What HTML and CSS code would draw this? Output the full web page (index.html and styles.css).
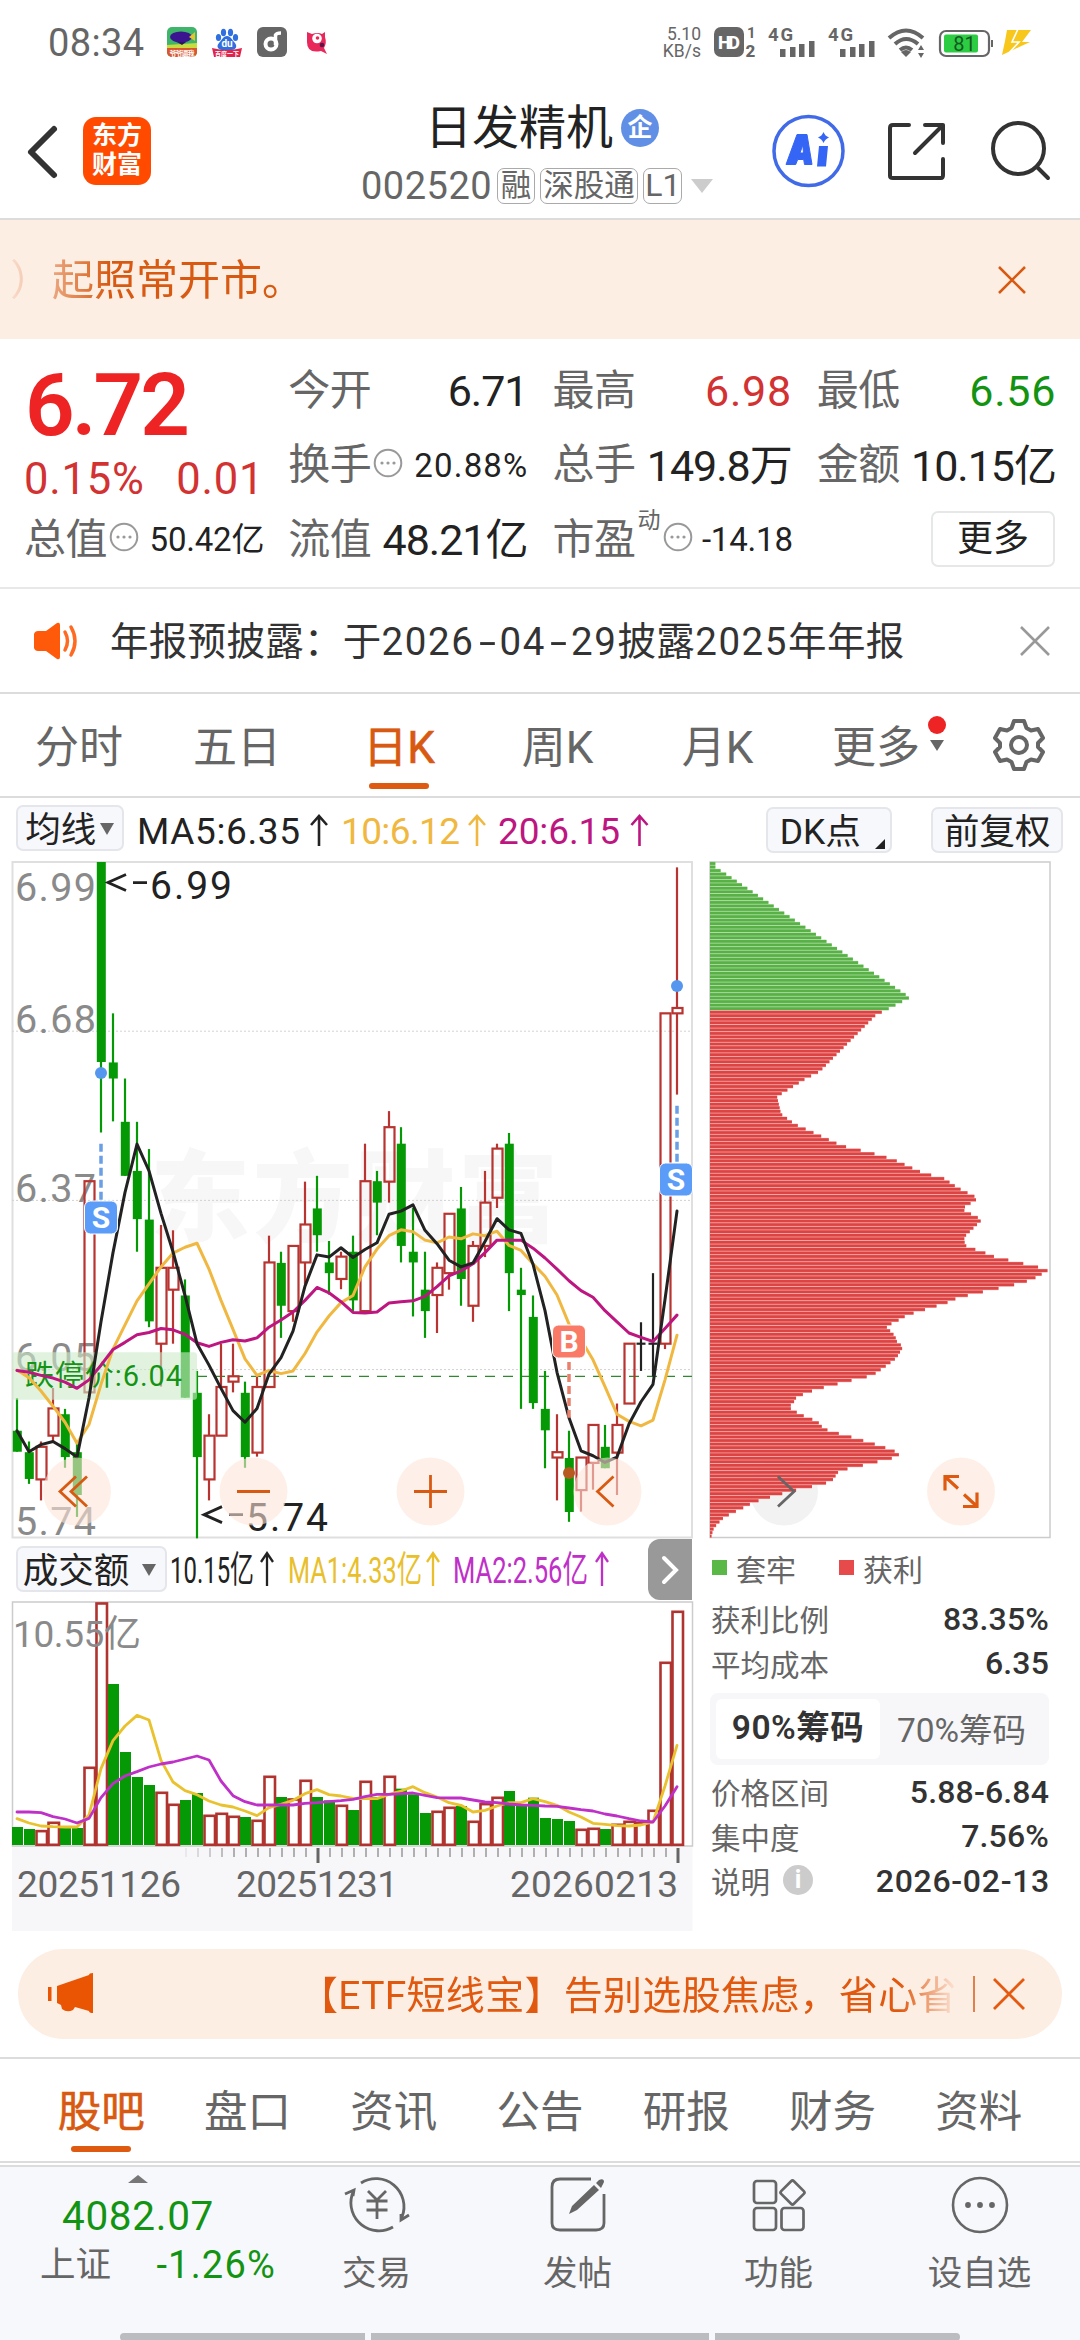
FILE: index.html
```html
<!DOCTYPE html>
<html lang="zh-CN">
<head>
<meta charset="utf-8">
<title>日发精机 002520</title>
<link rel="stylesheet" href="styles.css">
</head>
<body>
<div class="status">
  <span class="clock">08:34</span>
  <svg class="apps" width="164" height="32" viewBox="0 0 164 32">
    <defs><clipPath id="rc"><rect width="30" height="30" rx="5"/></clipPath></defs>
    <g clip-path="url(#rc)"><rect width="30" height="30" fill="#3fb56a"/><path d="M0 18L30 16V24H0Z" fill="#c9dc3f"/><rect y="21" width="30" height="9" fill="#d9562e"/><ellipse cx="14" cy="10" rx="11" ry="5.500" fill="#3b1590"/><path d="M22 10l6-5v9z" fill="#e5c22f"/><path d="M10 15h9l-4 3z" fill="#2a1560"/><text x="15" y="28.500" font-size="7" font-weight="700" fill="#fff" text-anchor="middle" textLength="25">爷爷逼我</text></g>
    <g transform="translate(45)" fill="#2f6fe0"><ellipse cx="6.500" cy="10.500" rx="2.600" ry="3.600"/><ellipse cx="11.500" cy="5.500" rx="2.600" ry="3.800"/><ellipse cx="18.500" cy="5.500" rx="2.600" ry="3.800"/><ellipse cx="23.500" cy="10.500" rx="2.600" ry="3.600"/><path d="M15 9c4 0 5 4 8 7 3 4 0 7-3 7H10c-4 0-6-4-3-7s4-7 8-7z"/><text x="15" y="20" font-size="10" font-weight="700" fill="#fff" text-anchor="middle">du</text><path d="M0 21q15 4 30 0l-2 9H2z" fill="#e0244e"/><text x="15" y="28.500" font-size="6" font-weight="700" fill="#fff" text-anchor="middle">百度一下</text></g>
    <g transform="translate(90)"><rect width="30" height="30" rx="6" fill="#666"/><circle cx="14" cy="17" r="5.500" fill="none" stroke="#fff" stroke-width="4"/><path d="M18.500 18V8q1-2 5.500-2" fill="none" stroke="#fff" stroke-width="3.500"/></g>
    <g transform="translate(140 4)"><path d="M0 1l5 2q6-2 10 0l3-2v5q2 6-1 11l3 6-6-3Q0 23 0 11z" fill="#e8285a"/><circle cx="10" cy="7.500" r="4.800" fill="#fff"/><circle cx="10.500" cy="7" r="1.800" fill="#e8285a"/><circle cx="15" cy="14" r="2.300" fill="#5b1548"/></g>
  </svg>
  <div class="net"><span>5.10</span><span>KB/s</span></div>
  <svg class="sig" width="330" height="32" viewBox="712 26 330 32">
    <g fill="#666"><rect x="714" y="27" width="30" height="30" rx="7"/>
    <text x="729" y="48.500" font-size="18" font-weight="800" fill="#fff" text-anchor="middle" textLength="22">HD</text>
    <text x="747" y="38" font-size="15" font-weight="700">1</text><text x="745.500" y="56.500" font-size="17" font-weight="800">2</text>
    <text x="768" y="41" font-size="18.500" font-weight="700" textLength="25">4G</text><text x="828" y="41" font-size="18.500" font-weight="700" textLength="25">4G</text>
    <path d="M780 49h5.500v8H780zM790 47h5.500v10H790zM799 44h5.500v13H799zM809 41h5.500v16H809zM840 49h5.500v8H840zM850 47h5.500v10H850zM859 44h5.500v13H859zM869 41h5.500v16H869z"/><path d="M906 57l-5-5q5-4 10 0z"/><path d="M918 50l3-5 3 5zM918 53l3 5 3-5z"/></g>
    <g fill="none" stroke="#666"><path d="M889 38q17-15 34 0M895 44q11-10 23 0M900 50q6-5 12 0" stroke-width="4"/><rect x="940" y="31" width="49" height="25" rx="6" stroke-width="2.200"/></g>
    <rect x="944" y="34.500" width="34" height="18" rx="2" fill="#2ccc43"/><rect x="991" y="40" width="2" height="7" fill="#666"/>
    <text x="964.500" y="51" font-size="20" fill="#14591f" text-anchor="middle">81</text>
    <path d="M1007 30h24l-9 12h8l-28 13 3-14z" fill="#f8c71c"/><path d="M1018 29l-6 13h7l-12 13" fill="none" stroke="#fff" stroke-width="1.600"/>
  </svg>
</div>

<header class="head">
  <svg class="back" width="36" height="60" viewBox="0 0 36 60"><path d="M30 7L7 30l23 23" fill="none" stroke="#333" stroke-width="6" stroke-linecap="round" stroke-linejoin="round"/></svg>
  <div class="logo"><span>东方</span><span>财富</span></div>
  <div class="title">
    <div class="name">日发精机<span class="qi">企</span></div>
    <div class="code">002520<span class="tag">融</span><span class="tag">深股通</span><span class="tag">L1</span><i class="tri-down pale"></i></div>
  </div>
  <svg class="acts" width="292" height="76" viewBox="768 113 292 76">
    <circle cx="808.500" cy="151" r="34.500" fill="#fff" stroke="#416ae8" stroke-width="3.500"/>
    <path d="M797 134.500h10l5 30h-7.500l-.8-5h-6l-2 5H786zM800 153h3.500l-.7-8z" fill="#3565f5" fill-rule="evenodd" stroke="#3565f5" stroke-width="1" stroke-linejoin="round"/>
    <path d="M819 146h9l-2 20.500h-9zM823.500 132q1.500 4 5.500 5.500-4 1.500-5.500 5.500-1.500-4-5.500-5.500 4-1.500 5.500-5.500z" fill="#3565f5"/>
    <g fill="none" stroke="#333" stroke-width="4" stroke-linecap="round" stroke-linejoin="round"><path d="M909 125H893q-3 0-3 3v48q0 2 3 2h48q2 0 2-3v-16M925 125h18v18M943 125l-28 28"/><circle cx="1018.500" cy="148.500" r="25.500"/><path d="M1037 167l11 11"/></g>
  </svg>
</header>

<div class="notice"><span class="marquee">）起照常开市。</span>
  <svg width="32" height="32" viewBox="0 0 32 32"><path d="M3 3l26 26M29 3L3 29" stroke="#d85a12" stroke-width="2.600"/></svg></div>

<section class="quote">
  <div class="main"><b>6.72</b><p><span>0.15%</span><span>0.01</span></p></div>
  <div class="q"><label>今开</label><span>6.71</span></div>
  <div class="q"><label>最高</label><span class="wide red">6.98</span></div>
  <div class="q"><label>最低</label><span class="wide green">6.56</span></div>
  <div class="q"><label>换手</label><svg class="dots" viewBox="0 0 30 30"><use href="#more"/></svg><span class="s pct">20.88%</span></div>
  <div class="q"><label>总手</label><span>149.8万</span></div>
  <div class="q"><label>金额</label><span>10.15亿</span></div>
  <div class="q"><label>总值</label><svg class="dots" viewBox="0 0 30 30"><use href="#more"/></svg><span class="s">50.42亿</span></div>
  <div class="q"><label>流值</label><span>48.21亿</span></div>
  <div class="q"><label>市盈</label><sup>动</sup><svg class="dots" viewBox="0 0 30 30"><use href="#more"/></svg><span class="s">-14.18</span></div>
  <div class="q"><span class="more">更多</span></div>
  <svg width="0" height="0" class="sprite"><symbol id="more" viewBox="0 0 30 30"><circle cx="15" cy="15" r="13.300" fill="none" stroke="#999" stroke-width="2"/><circle cx="9" cy="15" r="1.600" fill="#999"/><circle cx="15" cy="15" r="1.600" fill="#999"/><circle cx="21" cy="15" r="1.600" fill="#999"/></symbol></svg>
</section>

<div class="report">
  <svg width="46" height="40" viewBox="0 0 46 40"><path d="M4 10h8L23 2q3-1 3 2v32q0 3-3 2l-11-8H4q-3 0-4-3V13q1-3 4-3z" fill="#ff5a0a"/><path d="M31 11q5 9 0 18M37 6q8 14 0 28" fill="none" stroke="#ff6a22" stroke-width="3.500" stroke-linecap="round"/></svg>
  <span>年报预披露：于<em>2026<i>-</i>04<i>-</i>29</em>披露<em>2025</em>年年报</span>
  <svg class="x" width="32" height="32" viewBox="0 0 32 32"><path d="M2 2l28 28M30 2L2 30" stroke="#999" stroke-width="2.600"/></svg>
</div>

<nav class="periods">
  <span>分时</span><span>五日</span><span class="on">日K</span><span>周K</span><span>月K</span><span class="mo">更多<i class="dot"></i><i class="tri-down"></i></span>
  <svg width="54" height="54" viewBox="-27 -27 54 54" fill="none" stroke="#666" stroke-width="4"><path d="M-5-24H5L7.500-17 12-14.500 19-16 24-7 19-2V2L24 7 19 16 12 14.500 7.500 17 5 24H-5L-7.500 17-12 14.500-19 16-24 7-19 2V-2L-24-7-19-16-12-14.500-7.500-17Z" stroke-linejoin="round"/><circle r="8"/></svg>
</nav>

<div class="ma">
  <span class="btn b1">均线<i class="tri-down sm"></i></span>
  <svg width="530" height="50" viewBox="132 805 530 50" font-size="37"><text x="137" y="843.500" fill="#222" textLength="163">MA5:6.35</text><text x="341" y="843.500" fill="#f0b840" textLength="119">10:6.12</text><text x="498" y="843.500" fill="#bd1680" textLength="122">20:6.15</text>
  <g fill="none" stroke-width="2.600"><path d="M319 846v-29M311 825l8-9 8 9" stroke="#222"/><path d="M477 846v-29M469 825l8-9 8 9" stroke="#f0b840"/><path d="M639.500 846v-29M631.500 825l8-9 8 9" stroke="#bd1680"/></g></svg>
  <span class="btn b2">DK点<i class="corner"></i></span>
  <span class="btn b3">前复权</span>
</div>

<main class="board">
  <section class="left">
    <svg id="kline" width="682" height="677" viewBox="0 0 682 677"></svg>
    <div class="volhead">
      <span class="btn b4">成交额<i class="tri-down sm"></i></span>
      <svg width="481" height="60" viewBox="167 1539 481 60" font-size="37"><text x="170" y="1583" fill="#222" textLength="84" lengthAdjust="spacingAndGlyphs">10.15亿</text><text x="288" y="1583" fill="#e9bf2c" textLength="134" lengthAdjust="spacingAndGlyphs">MA1:4.33亿</text><text x="453" y="1583" fill="#bf30c8" textLength="135" lengthAdjust="spacingAndGlyphs">MA2:2.56亿</text>
      <g fill="none" stroke-width="2.300"><path d="M267 1586v-33M261 1562l6-9 6 9" stroke="#222"/><path d="M433 1586v-33M427 1562l6-9 6 9" stroke="#e9bf2c"/><path d="M602 1586v-33M596 1562l6-9 6 9" stroke="#bf30c8"/></g></svg>
      <span class="next"><svg width="20" height="32" viewBox="0 0 20 32"><path d="M4 4l12 12L4 28" fill="none" stroke="#fff" stroke-width="4" stroke-linecap="round"/></svg></span>
    </div>
    <svg id="volume" width="682" height="330" viewBox="0 0 682 330"></svg>
  </section>
  <section class="right">
    <svg id="chips" width="342" height="677" viewBox="0 0 342 677"></svg>
    <div class="legend"><i class="g"></i>套牢<i class="r"></i>获利</div>
    <dl><dt>获利比例</dt><dd>83.35%</dd><dt>平均成本</dt><dd>6.35</dd></dl>
    <div class="seg"><b>90%筹码</b><span>70%筹码</span></div>
    <dl><dt>价格区间</dt><dd>5.88-6.84</dd><dt>集中度</dt><dd>7.56%</dd><dt>说明<i class="info">i</i></dt><dd class="date">2026-02-13</dd></dl>
  </section>
</main>

<div class="promo">
  <svg width="46" height="42" viewBox="0 0 46 42" fill="#ea5504"><path d="M0 14h3.500v14H0zM9 13L41 2q0-2 4-2v40q-4 0-4-2l-14-4-2 3q-6 3-11-1l-1-4-4-2z"/></svg>
  <span class="txt">【ETF短线宝】告别选股焦虑，省心省</span><i class="bar"></i>
  <svg width="34" height="34" viewBox="0 0 34 34"><path d="M2 2l30 30M32 2L2 32" stroke="#e35a10" stroke-width="2.800"/></svg>
</div>

<nav class="tabs"><span class="on">股吧</span><span>盘口</span><span>资讯</span><span>公告</span><span>研报</span><span>财务</span><span>资料</span></nav>

<footer class="foot">
  <div class="index"><i class="tri-up"></i><b>4082.07</b><p><span>上证</span><span class="green">-1.26%</span></p></div>
  <div class="act"><svg width="66" height="60" viewBox="-33 -30 66 60" fill="none" stroke="#666" stroke-width="2.800"><path d="M-16-22A28 28 0 0 1 25 12l-1 3M24 9v6l8-5M16 22A28 28 0 0 1-25-10l2-5M-32-11l9-4-1 6"/><path d="M-9-14L0-5 9-14M0-5V14M-10.500-4h21M-10.500 5h21"/></svg>交易</div>
  <div class="act"><svg width="66" height="60" viewBox="-33 -30 66 60" fill="none" stroke="#666" stroke-width="2.800"><path d="M13-26H-18q-8 0-8 8v36q0 7 8 7h36q8 0 8-7V-11"/><path d="M-9 9l3-8L16-20l5 5L-1 5zM18-22l3-3q5-2 5 2l-3 6z" fill="#666" stroke="none"/></svg>发帖</div>
  <div class="act"><svg width="66" height="60" viewBox="-33 -30 66 60" fill="none" stroke="#666" stroke-width="2.700"><rect x="-25" y="-24" width="22" height="22" rx="3"/><rect x="-25" y="3" width="22" height="22" rx="3"/><rect x="2.500" y="3" width="22" height="22" rx="3"/><rect x="4.500" y="-21.500" width="18" height="18" rx="2" transform="rotate(45 13.500 -12.500)"/></svg>功能</div>
  <div class="act"><svg width="66" height="60" viewBox="-33 -30 66 60"><circle r="27" fill="none" stroke="#666" stroke-width="2.600"/><g fill="#666"><circle cx="-12" r="2.900"/><circle r="2.900"/><circle cx="12" r="2.900"/></g></svg>设自选</div>
  <div class="gesture"><i></i><i></i><i></i></div>
</footer>
<script src="script.js"></script>
</body>
</html>
```

FILE: styles.css
```css
* { box-sizing: border-box; margin: 0; padding: 0; }
body { width: 1080px; height: 2340px; overflow: hidden; background: #fff; color: #222; font-family: Roboto, "Noto Sans CJK SC", sans-serif; font-weight: 400; }
svg { display: block; flex: none; overflow: visible; }
svg text { font-family: Roboto, "Noto Sans CJK SC", sans-serif; }
i, em { font-style: normal; }
.red { color: #d23232; }
.green { color: #129412; }
.sprite { position: absolute; }

.status { height: 84px; display: flex; align-items: flex-start; padding: 27px 38px 0 48px; color: #666; }
.clock { font-size: 38px; line-height: 32px; width: 119px; letter-spacing: .4px; }
.net { width: 37px; margin-left: 333px; font-size: 17.500px; line-height: 17px; display: flex; flex-direction: column; align-items: flex-end; margin-top: -1px; }
.sig { margin-left: 11px; margin-top: -1px; }

.head { height: 136px; display: flex; border-bottom: 2px solid #dcdcdc; padding-left: 24px; }
.back { margin-top: 38px; }
.logo { width: 68px; height: 68px; margin: 33px 0 0 23px; border-radius: 13px; background: #ff4a00; color: #fff; font-size: 25px; font-weight: 700; line-height: 29px; padding-top: 4px; display: flex; flex-direction: column; align-items: center; }
.title { width: 410px; margin-left: 186px; }
.name { display: flex; align-items: center; height: 60px; font-size: 47px; margin: 14px 0 0 88px; line-height: 60px; }
.qi { width: 38px; height: 38px; border-radius: 50%; background: #618fe6; color: #fff; font-size: 25px; line-height: 37px; text-align: center; font-weight: 700; margin-left: 8px; }
.code { display: flex; align-items: center; height: 40px; margin: 8px 0 0 24px; font-size: 38px; letter-spacing: .5px; color: #666; }
.tag { height: 36px; border: 1.500px solid #aaa; border-radius: 7px; font-size: 30.500px; letter-spacing: 0; line-height: 33px; padding: 0 2.500px; margin-left: 5px; }
.tag + .tag + .tag { font-size: 32px; padding: 0 1px; }
.tri-down { display: inline-block; border: 7.500px solid transparent; border-top: 11px solid #666; border-bottom: 0; }
.tri-down.pale { border-width: 14px 11px 0; border-top-color: #ccc; margin-left: 9px; }
.tri-down.sm { border-width: 12px 7px 0; margin-top: -3px; }
.acts { margin: 29px 0 0 21px; }

.notice { height: 119px; background: #fdeee4; display: flex; align-items: center; justify-content: space-between; padding: 0 52px 0 10px; color: #d85a12; font-size: 42px; }
.marquee { margin: -6px 0 0 -11px; padding-left: 11px; mask-image: linear-gradient(90deg, transparent, #000 110px); -webkit-mask-image: linear-gradient(90deg, transparent, #000 110px); }

.quote { height: 250px; border-bottom: 2px solid #e8e8e8; padding: 15px 25px 0 24px; display: grid; grid-template-columns: repeat(4, 1fr); grid-template-rows: repeat(3, 74.500px); column-gap: 26px; }
.main { grid-row: span 2; color: #d23232; display: flex; flex-direction: column; }
.main b { height: 100px; line-height: 103px; font-size: 87px; color: #ee2424; font-weight: 600; letter-spacing: -3px; padding-left: 1px; }
.main p { display: flex; justify-content: space-between; font-size: 43.500px; line-height: 51px; letter-spacing: .8px; margin-right: -2px; }
.q { display: flex; align-items: center; font-size: 43px; letter-spacing: -1px; line-height: 52px; }
.q label { font-size: 42px; color: #666; letter-spacing: -.5px; margin-top: -1px; }
.q > span { margin: 0 -1px 0 auto; white-space: nowrap; color: #222; }
.q > .wide { letter-spacing: .7px; }
.q > .red { color: #d23232; }
.q > .green { color: #129412; }
.q > .s { font-size: 33px; letter-spacing: -.2px; margin-right: -2px; }
.q > .pct { letter-spacing: 1.200px; }
.q sup { font-size: 23px; line-height: 30px; color: #666; align-self: flex-start; margin: 3px 1px 0 2px; }
.dots { width: 30px; height: 30px; margin: -6px 0 0 2px; }
.q > .more { width: 124px; height: 56px; margin: -3px 0 0 auto; border: 2px solid #e6e8e8; border-radius: 7px; font-size: 36px; line-height: 52px; text-align: center; letter-spacing: 0; }

.report { height: 105px; border-bottom: 2px solid #dcdcdc; display: flex; align-items: center; padding: 0 29px 0 34px; font-size: 38.500px; color: #333; }
.report span { margin: -5px 0 0 30px; white-space: nowrap; letter-spacing: .3px; }
.report em { letter-spacing: 1.600px; }
.report em i { display: inline-block; width: 25px; text-align: center; letter-spacing: 0; transform: scaleX(1.600); }
.report .x { margin-left: auto; }

.periods { height: 104px; border-bottom: 2px solid #dcdcdc; display: flex; align-items: center; font-size: 44px; color: #666; }
.periods > span { width: 158px; height: 102px; line-height: 109px; text-align: center; }
.periods > .on { width: 166px; }
.periods > .on + span { width: 151px; }
.periods > .on + span + span { width: 169px; }
.on { position: relative; -webkit-text-stroke: .6px; }
.periods .on, .tabs .on { color: #d85a12; }
.on::after { content: ""; position: absolute; left: 50%; bottom: 7px; width: 60px; height: 6px; margin-left: -30px; border-radius: 3px; background: #dd5a10; }
.periods > .mo { width: 190px; text-align: left; padding-left: 30px; position: relative; }
.mo .dot { position: absolute; left: 126px; top: 22px; width: 18px; height: 18px; border-radius: 50%; background: #ee2424; }
.mo .tri-down { position: absolute; left: 128px; top: 46px; }

.ma { height: 63px; padding: 7px 17px 0 16px; display: flex; }
.btn { height: 46px; border: 2px solid #e4e6ec; border-radius: 7px; background: #f7f8fb; display: flex; align-items: center; justify-content: center; font-size: 35.500px; line-height: 40px; padding-top: 4px; white-space: nowrap; }
.b1 { width: 108px; gap: 4px; font-size: 35.500px; }
.ma > svg { margin-left: 8px; }
.b2 { width: 127px; margin: 2px 0 0 104px; position: relative; justify-content: flex-start; padding-left: 12px; }
.corner { border: 5px solid; border-color: transparent #222 #222 transparent; position: absolute; right: 5px; bottom: 2px; }
.b3 { width: 132px; margin: 2px 0 0 39px; }
.b4 { width: 151px; gap: 13px; margin: 8px 0 0 4px; padding-right: 4px; }

.board { display: flex; height: 1088px; padding: 0 29px 0 12px; justify-content: space-between; }
.left { width: 682px; }
.volhead { display: flex; height: 63px; align-items: flex-start; }
.volhead > svg { margin-top: 1px; }
.next { width: 44px; height: 61px; margin-top: 1px; background: #999; border-radius: 12px 0 0 12px; display: flex; align-items: center; justify-content: center; }
.right { width: 342px; color: #666; font-size: 30px; padding-right: 2px; }
.legend { height: 57px; margin-top: 1px; display: flex; align-items: center; padding-left: 3px; }
.legend i { width: 15px; height: 15px; margin-right: 9px; }
.legend .g { background: #5ab946; }
.legend .r { background: #e64a4a; margin-left: 43px; }
dl { display: grid; grid-template-columns: auto auto; grid-auto-rows: 44.500px; align-items: center; padding-left: 2px; }
dl dd { text-align: right; color: #333; font-weight: 500; font-size: 32px; letter-spacing: .15px; padding-top: 1px; }
dl .date { letter-spacing: .7px; margin-right: -1px; }
dt { display: flex; align-items: center; white-space: nowrap; font-size: 29.500px; }
.seg { height: 72px; margin: 8px 0 4px 1px; border-radius: 8px; background: #f7f7fa; padding: 6px; display: flex; align-items: center; font-size: 33.500px; }
.seg b { width: 164px; height: 60px; line-height: 57px; text-align: center; color: #333; background: #fff; border-radius: 6px; font-weight: 600; letter-spacing: .5px; }
.seg span { flex: 1; text-align: center; margin-top: -3px; }
.info { width: 30px; height: 30px; border-radius: 50%; background: #ccc; color: #fff; font-size: 25px; line-height: 29px; font-weight: 700; text-align: center; margin-left: 13px; }

.promo { width: 1044px; height: 90px; margin: 0 18px 18px; border-radius: 45px; background: #fdeee4; display: flex; align-items: center; padding-left: 30px; color: #e0590f; font-size: 39px; }
.promo .txt { margin: -4px 0 0 205px; width: 656px; white-space: nowrap; letter-spacing: .3px; mask-image: linear-gradient(90deg, #000 600px, transparent 660px); -webkit-mask-image: linear-gradient(90deg, #000 600px, transparent 660px); }
.promo .bar { width: 2px; height: 36px; background: #e0804c; margin: 0 17px 0 18px; }

.tabs { height: 106px; border-top: 2px solid #dcdcdc; border-bottom: 2px solid #dcdcdc; display: flex; padding: 0 28px; font-size: 43.500px; color: #666; }
.tabs span { flex: 1; text-align: center; line-height: 107px; }
.tabs .on::after { bottom: 9px; }

.foot { height: 178px; margin-top: 2px; border-top: 2px solid #dcdcdc; background: #f7f8fb; display: flex; position: relative; color: #666; font-size: 34.500px; }
.index { width: 276px; display: flex; flex-direction: column; align-items: center; }
.tri-up { border: 10.500px solid transparent; border-bottom: 8px solid #777; border-top: 0; margin-top: 8px; }
.index b { font-weight: 400; font-size: 40.500px; line-height: 64px; color: #129412; margin-top: 1px; letter-spacing: .7px; }
.index p { width: 100%; display: flex; justify-content: space-between; padding-left: 40px; font-size: 35.500px; line-height: 35px; }
.index p .green { font-size: 38px; letter-spacing: 1.200px; }
.act { width: 201px; text-align: center; }
.act svg { margin: 8px auto 10px; }
.gesture { position: absolute; left: 120px; bottom: 2px; width: 840px; display: flex; gap: 6px; }
.gesture i { height: 8px; background: #bbbcbf; width: 245px; }
.gesture i:first-child { border-radius: 4px 0 0 4px; }
.gesture i:nth-child(2) { width: 338px; }
.gesture i:last-child { border-radius: 0 4px 4px 0; }
```

FILE: script.js
```js
const GREEN = '#059a05', RED = '#b83431', STEP = 12;
const line = (x1, y1, x2, y2, c, w, extra = '') => `<line x1="${x1}" y1="${y1}" x2="${x2}" y2="${y2}" stroke="${c}" stroke-width="${w}" ${extra}/>`;
const poly = (pts, c, w = 3) => `<polyline points="${pts.map(p => p.join()).join(' ')}" fill="none" stroke="${c}" stroke-width="${w}" stroke-linejoin="round" stroke-linecap="round"/>`;
const text = (x, y, s, size, c, w, extra = '') => `<text x="${x}" y="${y}" font-size="${size}" fill="${c}" ${w ? `textLength="${w}"` : ''} ${extra}>${s}</text>`;

// Candlesticks: kind, high, body top, body bottom, low (chart units, 2.24 per pixel)
const Y = v => (v - 25) / 2.24 + 1;
const candles = `g 1226 1299 1346 1346;g 1323 1347 1407 1418;r 1323 1335 1408 1455;r 1203 1249 1310 1322;g 1250 1262 1358 1382;g 1325 1347 1443 1492;r 740 740 1213 1213;g 25 25 473 631;g 364 474 510 606;g 510 607 728 728;g 607 717 825 898;g 668 826 1054 1067;r 838 934 1104 1200;r 850 934 983 1104;g 960 996 1225 1225;g 1165 1214 1358 1540;r 1262 1310 1408 1455;r 1104 1201 1310 1310;r 1104 1177 1189 1213;g 1189 1214 1358 1382;r 1177 1201 1348 1357;r 862 922 1201 1201;g 898 923 1019 1091;r 885 885 1031 1055;r 741 837 922 970;g 728 801 861 898;g 874 922 946 994;r 898 909 959 982;g 862 898 1007 1031;r 656 740 1031 1031;g 717 740 788 861;r 583 619 741 788;g 619 656 885 922;g 800 898 922 1043;g 898 983 1031 1091;r 922 934 995 1080;r 813 813 946 983;g 753 801 959 1019;r 874 885 1019 1055;r 717 788 885 910;r 656 667 777 800;g 632 656 946 1031;g 934 983 995 1250;g 996 1044 1237 1250;g 1165 1250 1298 1383;r 1262 1347 1359 1455;g 1299 1360 1481 1503;r 1359 1359 1432 1480;r 1286 1286 1371 1431;g 1286 1335 1383 1383;r 1238 1286 1348 1443;r 1104 1104 1238 1238;k 1056 1104 1104 1165;k 946 1104 1104 1177;r 364 364 1104 1116;r 37 352 364 546`
  .split(';').map(s => s.split(' '));
const ma5 = [1299,1346,1330,1323,1339,1358,1225,1055,900,765,657,717,812,898,996,1104,1152,1204,1254,1280,1249,1172,1135,1076,975,905,910,889,911,893,878,814,807,793,850,880,917,932,923,875,824,849,857,926,1030,1168,1270,1344,1355,1370,1358,1284,1234,1195,1005,807];
const ma10 = [1163,1180,1210,1244,1280,1327,1285,1195,1116,1062,1008,970,932,901,888,879,937,1007,1072,1138,1175,1164,1171,1165,1126,1078,1042,1012,996,932,892,862,849,853,872,878,865,869,858,862,852,884,895,925,953,995,1060,1095,1140,1200,1262,1278,1288,1275,1185,1085];
const ma20 = [1164,1168,1175,1181,1190,1204,1185,1152,1117,1101,1084,1079,1070,1073,1083,1102,1110,1101,1095,1098,1091,1067,1051,1033,1007,978,990,1010,1034,1035,1033,1013,1010,1008,998,976,952,941,925,900,872,872,872,890,912,937,963,985,1000,1030,1055,1080,1090,1099,1070,1040];

let k = '<rect x=".5" y="1" width="679.5" height="675.500" fill="#fff" stroke="#dfdfdf" stroke-width="2"/>';
k += text(138, 373, '东方财富', 100, '#f7f7f7', 408, 'font-weight="900"');
[404, 783, 1162].forEach(v => k += line(0, Y(v), 680, Y(v), '#d2d2d2', 1, 'stroke-dasharray="2 2"'));
k += line(185, Y(1177), 680, Y(1177), '#2c8a2c', 1.2, 'stroke-dasharray="10 8"');
[['6.99', 112], ['6.68', 407], ['6.37', 787], ['6.05', 1166], ['5.74', 1533]].forEach(([s, v]) => k += text(3, Y(v), s, 39.5, '#8a8a8a', 81));
candles.forEach(([t, h, a, b, l], i) => {
  const x = 5 + i * STEP; [h, a, b, l] = [h, a, b, l].map(Number);
  if (t === 'g') {
    k += line(x, Y(h), x, Y(l), GREEN, 2.2) + `<rect x="${x - 4.200}" y="${Y(a)}" width="9" height="${Math.max(Y(b) - Y(a), 2)}" fill="${GREEN}"/>`;
  } else if (t === 'k') {
    k += line(x, Y(h), x, Y(l), '#222', 2.2) + line(x - 4.5, Y(a), x + 4.5, Y(a), '#222', 2.2);
  } else {
    k += line(x, Y(h), x, Y(a), RED, 2.2) + line(x, Y(b), x, Y(l), RED, 2.2) + `<rect x="${x - 4.5}" y="${Y(a)}" width="10" height="${Y(b) - Y(a)}" fill="none" stroke="${RED}" stroke-width="2.200"/>`;
  }
});
k += `<rect x="0" y="${Y(1123)}" width="185" height="47.500" rx="3" fill="#cdebc9" opacity=".6"/>` + text(13, Y(1199), '跌停价:6.04', 29, '#149414', 157);
[[ma10, '#f0b840'], [ma20, '#bd1680'], [ma5, '#222']].forEach(([a, c]) => k += poly(a.map((v, i) => [5 + i * STEP, Y(v)]), c));
const tag = (x, v, s) => `<path d="M${x + 19} ${Y(v - 54)}l-18 8 18 8M${x + 26} ${Y(v - 36)}h14" fill="none" stroke="#222" stroke-width="2.800"/>` + text(x + 43, Y(v), s, 39, '#222', 82);
k += tag(95, 107, '6.99') + tag(191, 1523, '5.74');
const mark = (x, top, s, c) => `<rect x="${x - 16.500}" y="${top}" width="33" height="33" rx="6" fill="${c}" stroke="#fff" stroke-width="1"/><text x="${x}" y="${top + 27}" font-size="30" font-weight="700" fill="#fff" text-anchor="middle">${s}</text>`;
[[89, 656, 783], [665, 571, 697]].forEach(([x, a, b]) => k += line(x, Y(a), x, Y(b), '#6a9fe6', 3.5, 'stroke-dasharray="8 4"'));
k += line(557, Y(1145), 557, Y(1270), '#e8806c', 3.5, 'stroke-dasharray="8 4"');
k += mark(89, 340, 'S', '#5b9cf8') + mark(664, 302, 'S', '#5b9cf8') + mark(557, 464, 'B', '#fa7a68');
k += '<circle cx="89" cy="212" r="6" fill="#5596ee"/><circle cx="665" cy="125" r="6" fill="#5596ee"/><circle cx="557" cy="612" r="6" fill="#b75a20"/>';
const pad = (x, path) => `<g transform="translate(${x} 630.500)"><circle r="34" fill="#fde6d8" opacity=".58"/><path d="${path}" fill="none" stroke="#d85a12" stroke-width="2.800"/></g>`;
k += pad(65, 'M-1-15l-16 15 16 15M10-15L-6 0l16 15') + pad(241.5, 'M-16.500 0h33') + pad(418.500, 'M-16.500 0h33M0-16.500v33') + pad(595.500, 'M6-15L-10 0 6 15');
document.getElementById('kline').innerHTML = k;

// Chip distribution: [vertical position, bar end] knots, interpolated between rows
const knots = [28,77,36,77,44,93,52,110,328,661,352,600,368,558,494,390,502,369,510,348,550,262,589,274,612,316,636,387,660,456,676,544,691,612,723,706,731,758,755,806,778,866,802,816,826,877,866,822,873,827,881,822,889,840,897,880,905,897,913,936,921,986,929,1024,937,1080,945,1062,953,1045,961,1023,969,989,977,942,985,894,993,848,1001,803,1009,783,1017,750,1025,716,1032,684,1040,652,1056,615,1064,588,1088,618,1096,618,1111,640,1135,621,1151,594,1175,548,1183,500,1191,458,1199,415,1207,376,1215,348,1223,321,1239,309,1245,294,1262,332,1278,384,1294,402,1302,434,1310,473,1326,545,1340,601,1348,626,1356,629,1364,586,1372,542,1380,498,1388,449,1412,426,1420,390,1428,340,1436,294,1444,257,1452,220,1460,188,1468,170,1476,147,1484,126,1492,104,1500,93,1508,83,1516,73,1524,69,1536,65];
const chipAt = v => {
  for (let i = 2; i < knots.length; i += 2) if (v <= knots[i]) {
    const t = (v - knots[i - 2]) / (knots[i] - knots[i - 2]);
    return (knots[i - 1] + t * (knots[i + 1] - knots[i - 1]) - 61) / 3;
  }
  return 1;
};
let c = '<rect x="1" y="1" width="340" height="675.500" fill="#fff" stroke="#ccc" stroke-width="1.500"/><circle cx="75" cy="630.500" r="34" fill="#f2f2f2"/>';
for (let i = 0; i <= 190; i++) {
  const v = 28 + i * 7.93, g = v < 356, w = chipAt(v), y = Y(v) - 1.200;
  c += `<rect x="1" y="${y - .4}" width="${w}" height="3.600" fill="${g ? '#a5dc9c' : '#f4a09e'}"/><rect x="1" y="${y}" width="${w}" height="2.700" fill="${g ? '#59b046' : '#dc4444'}"/>`;
}
c += '<path d="M69 615.500l16 15-16 15" fill="none" stroke="#666" stroke-width="2.800"/><g transform="translate(252 630.500)"><circle r="34" fill="#fde6d8" opacity=".58"/><path d="M-16-1v-14h14M-15-14l12 11M16 1v14H2M15 14L3 3" fill="none" stroke="#dd5a10" stroke-width="3.200"/></g>';
document.getElementById('chips').innerHTML = c;

// Turnover bars: kind + top position, three units per pixel
const bars = 'g888 g894 r898 r873 g888 g891 r708 r215 g459 g663 g738 g762 r783 r819 g807 g786 r852 r846 r855 g858 r867 r735 g798 r803 r747 g798 g808 r822 g837 r750 g798 r735 g773 g790 g846 r840 r828 g825 r870 r817 r798 g780 g822 g800 g861 g864 g870 r894 r891 g894 r879 r870 r873 r837 r393 r240'.split(' ');
const v1 = [863,876,885,887,888,888,852,713,629,585,553,567,688,753,779,791,810,822,828,840,854,830,820,808,788,776,791,795,802,803,803,790,780,767,785,798,815,823,843,838,825,815,815,803,812,823,843,858,877,880,884,885,882,873,765,643];
const v2 = [843,843,845,857,864,876,862,800,758,735,722,708,699,693,684,675,687,750,794,812,822,822,822,822,817,815,812,809,805,797,790,790,788,786,793,800,801,801,807,813,815,819,822,823,825,826,831,836,840,849,855,863,870,873,825,767];
const V = n => (n - 213) / 3 + 1;
let b = '<rect x="0" y="245" width="680.500" height="85" fill="#f7f7fa"/><rect x=".5" y="1" width="680" height="244" fill="#fff" stroke="#ccc" stroke-width="1.500"/>';
bars.forEach((s, i) => {
  const x = 5 + i * STEP, y = V(+s.slice(1));
  b += s[0] === 'g' ? `<rect x="${x - 5}" y="${y}" width="11" height="${244 - y}" fill="${GREEN}"/>`
    : `<rect x="${x - 4.500}" y="${y + .8}" width="10.500" height="${243 - y}" fill="#fff" stroke="#b0332f" stroke-width="2.600"/>`;
});
b += poly(v1.map((v, i) => [5 + i * STEP, V(v)]), '#e9c22e', 2.8) + poly(v2.map((v, i) => [5 + i * STEP, V(v)]), '#bf30c8', 2.8);
b += text(1, 46, '10.55亿', 37, '#8a8a8a', 128);
for (let i = 14; i < 56; i++) {
  const big = i === 25 || i === 55;
  b += line(6 + i * STEP, 247, 6 + i * STEP, big ? 262 : 256, big ? '#666' : '#999', big ? 3 : 1.500, i < 18 ? `opacity="${(i - 13) / 5}"` : '');
}
b += text(5, 296, '20251126', 37, '#666', 164) + text(224, 296, '20251231', 37, '#666', 162) + text(498, 296, '20260213', 37, '#666', 168);
document.getElementById('volume').innerHTML = b;
```
